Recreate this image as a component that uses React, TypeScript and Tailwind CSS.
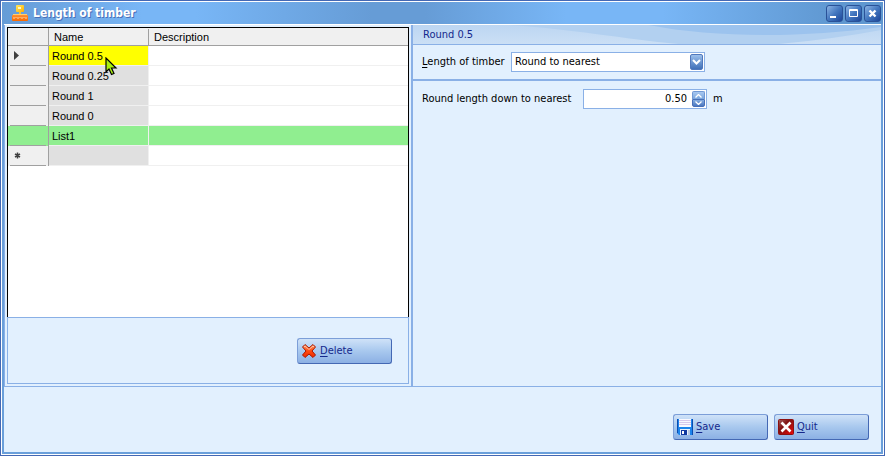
import { useState } from "react";

const rows = [
  { name: "Round 0.5", description: "", state: "current" },
  { name: "Round 0.25", description: "", state: "" },
  { name: "Round 1", description: "", state: "" },
  { name: "Round 0", description: "", state: "" },
  { name: "List1", description: "", state: "marked" },
  { name: "", description: "", state: "new" },
];

const nameBg: Record<string, string> = {
  current: "bg-[#ffff00]",
  marked: "bg-[#90ee90]",
  new: "bg-[#e0e0e0]",
  "": "bg-[#e0e0e0]",
};

function AppIcon() {
  return (
    <svg width="18" height="18" viewBox="0 0 18 18" aria-hidden="true">
      <defs>
        <linearGradient id="gold" x1="0" y1="0" x2="1" y2="1">
          <stop offset="0" stopColor="#ffe860" />
          <stop offset="1" stopColor="#ffb000" />
        </linearGradient>
        <linearGradient id="tape" x1="0" y1="0" x2="0" y2="1">
          <stop offset="0" stopColor="#ff9030" />
          <stop offset="1" stopColor="#f86800" />
        </linearGradient>
      </defs>
      <rect x="5" y="1" width="8" height="7" rx="1" fill="url(#gold)" />
      <path d="M7 3h3v2H7z" fill="#fff8c8" />
      <path d="M8 8h2v2H8z" fill="#f0c040" />
      <path d="M2 10.500h14" stroke="#ffd070" />
      <rect x="1" y="11" width="16" height="6" rx="1" fill="url(#tape)" />
      <path d="M3 13v2M5 13v1M7 13v2M9 13v1M11 13v2M13 13v1M15 13v2" stroke="#ffd8a8" />
    </svg>
  );
}

function DeleteIcon() {
  return (
    <svg width="16" height="16" viewBox="0 0 16 16" aria-hidden="true">
      <defs>
        <linearGradient id="cross" x1="0" y1="0" x2="0" y2="1">
          <stop offset="0" stopColor="#ffa070" />
          <stop offset="0.500" stopColor="#ff4a10" />
          <stop offset="1" stopColor="#f02800" />
        </linearGradient>
      </defs>
      <path
        d="M4 1.500 8 5l4-3.500L14.500 4 11 8l3.500 4-2.500 2.500L8 11l-4 3.500L1.500 12 5 8 1.500 4z"
        fill="url(#cross)"
        stroke="#a81800"
        strokeLinejoin="round"
      />
      <path d="M3 4l1-1 4 3.500L12 3l1 1" fill="none" stroke="#ffd0b8" strokeWidth="0.800" />
    </svg>
  );
}

function SaveIcon() {
  return (
    <svg width="16" height="16" viewBox="0 0 16 16" aria-hidden="true">
      <path d="M0 0h16v16H2l-2-2z" fill="#1c84ec" />
      <path d="M0 0h1v14H0zM15 0h1v16h-1z" fill="#0a4cb0" />
      <rect x="2" y="0" width="12" height="8" fill="#f8f8ff" />
      <path d="M2 1.500h12M2 3.500h12M2 5.500h12" stroke="#d8c8ec" />
      <rect x="3" y="10" width="10" height="6" fill="#e8f0fc" />
      <rect x="4" y="11" width="6" height="5" fill="#1038a0" />
      <rect x="5" y="12" width="2" height="3" fill="#fff" />
      <rect x="11" y="11" width="2" height="5" fill="#b8c8e0" />
    </svg>
  );
}

function QuitIcon() {
  return (
    <svg width="16" height="16" viewBox="0 0 16 16" aria-hidden="true">
      <defs>
        <linearGradient id="quit" x1="0" y1="0" x2="1" y2="1">
          <stop offset="0" stopColor="#a06060" />
          <stop offset="0.400" stopColor="#801010" />
          <stop offset="1" stopColor="#f00808" />
        </linearGradient>
      </defs>
      <rect x="0.500" y="0.500" width="15" height="15" rx="1" fill="url(#quit)" stroke="#8c1010" />
      <path d="M3.500 3.500l9 9M12.500 3.500l-9 9" stroke="#fff" strokeWidth="2.600" />
    </svg>
  );
}

function Cursor() {
  return (
    <svg className="pointer-events-none absolute top-[9px] left-[53px]" width="13" height="19" viewBox="0 0 13 19" aria-hidden="true">
      <path
        d="M1 1v14l3-3 2.500 5.500 2.500-1L6.500 11H11z"
        fill="#aaf010"
        stroke="#000"
        strokeWidth="1.200"
      />
    </svg>
  );
}

function CaptionButton({ label, children }: { label: string; children: React.ReactNode }) {
  return (
    <button
      aria-label={label}
      className="flex size-[17px] items-center justify-center rounded-[3px] border border-[#2a5298] bg-linear-to-br from-[#8cb4e4] via-[#4478c0] to-[#1c469a]"
    >
      <svg width="15" height="15" viewBox="0 0 15 15" fill="none" stroke="#fff" aria-hidden="true">
        {children}
      </svg>
    </button>
  );
}

function ActionButton({ icon, hotkey, rest }: { icon: React.ReactNode; hotkey: string; rest: string }) {
  return (
    <button className="flex h-[26px] w-[95px] items-center gap-[3px] rounded-[3px] border border-t-[#7c9ed8] border-r-[#4468b4] border-b-[#4468b4] border-l-[#7c9ed8] bg-linear-to-b from-[#cfe2f8] via-[#a8c8ee] to-[#8cb0e4] pl-[3px] text-[#14288c]">
      {icon}
      <span>
        <span className="underline underline-offset-2">{hotkey}</span>
        {rest}
      </span>
    </button>
  );
}

export default function App() {
  const [method, setMethod] = useState("nearest");
  const [step, setStep] = useState("0.50");

  const bump = (d: number) => setStep((parseFloat(step || "0") + d).toFixed(2));

  return (
    <div className="min-h-screen flex flex-col border border-[#4468b4] bg-white p-px font-['DejaVu_Sans_Condensed','DejaVu_Sans',sans-serif] text-[11px] leading-4 text-black">
      <div className="flex grow flex-col bg-[#6a9fda]">
        <header className="flex h-[22px] items-center bg-[linear-gradient(90deg,#669cd6_0%,#78b6f6_16%,#78b6f6_22%,#669cd6_42%,#669cd6_48%,#78b6f6_64%,#78b6f6_75%,#5f97d0_95%)] pr-[2px] pl-[9px]">
          <AppIcon />
          <h1 className="grow pl-1 text-[12px] font-bold text-white [text-shadow:1px_1px_0_#4a70b8]">Length of timber</h1>
          <div className="flex gap-[2px]">
            <CaptionButton label="Minimize">
              <path d="M3 11h6" strokeWidth="2" />
            </CaptionButton>
            <CaptionButton label="Maximize">
              <path d="M3.500 3.500h8v7h-8zM3 4.500h9" />
            </CaptionButton>
            <CaptionButton label="Close">
              <path d="M4.500 4.500l6 6M10.500 4.500l-6 6" strokeWidth="2.400" />
            </CaptionButton>
          </div>
        </header>

        <div className="mx-[2px] mb-[2px] flex grow flex-col border-t border-white bg-[#e2f0fe]">
          <div className="flex h-[362px] border-b border-[#8ab0e6]">
            {/* list of rounding rules */}
            <section className="flex w-[409px] shrink-0 flex-col border-r-2 border-l border-[#8ab0e6] p-[2px]">
              <div className="h-[290px] border border-b-0 border-black bg-white font-['Liberation_Sans',Arial,sans-serif]">
                <table className="w-full table-fixed border-separate border-spacing-0">
                  <colgroup>
                    <col className="w-[41px]" />
                    <col className="w-[100px]" />
                    <col />
                  </colgroup>
                  <thead>
                    <tr className="h-[18px] bg-[#f0f0f0] text-left">
                      <th className="border-r border-b border-[#a0a0a0] p-0"></th>
                      <th className="border-b border-[#a0a0a0] p-0 font-normal">
                        <div className="h-4 border-r border-[#a0a0a0] pl-[5px]">Name</div>
                      </th>
                      <th className="border-b border-[#a0a0a0] p-0 font-normal">
                        <div className="h-4 pl-[5px]">Description</div>
                      </th>
                    </tr>
                  </thead>
                  <tbody>
                    {rows.map((r) => (
                      <tr key={r.name} className="h-5">
                        <td className={`border-r border-[#a0a0a0] p-0 px-[2px] ${r.state === "marked" ? "bg-[#90ee90]" : "bg-[#f0f0f0]"}`}>
                          <div className="flex h-5 items-center border-b border-[#a0a0a0] pl-1">
                            {r.state === "current" && (
                              <svg width="5" height="9" viewBox="0 0 5 9" aria-hidden="true">
                                <path d="M0 0v9l5-4.500z" fill="#404040" />
                              </svg>
                            )}
                            {r.state === "new" && (
                              <svg width="7" height="7" viewBox="0 0 7 7" aria-hidden="true">
                                <path d="M3.500 0.500v6M1 2l5 3M6 2l-5 3" stroke="#404040" strokeWidth="1.500" />
                              </svg>
                            )}
                          </div>
                        </td>
                        <td className={`border-r border-b border-[#f0f0f0] p-0 pl-[3px] ${nameBg[r.state]}`}>
                          <div className="relative">
                            {r.name}
                            {r.state === "current" && <Cursor />}
                          </div>
                        </td>
                        <td className={`border-b border-[#f0f0f0] p-0 ${r.state === "marked" ? "bg-[#90ee90]" : ""}`}>{r.description}</td>
                      </tr>
                    ))}
                  </tbody>
                </table>
              </div>
              <div className="flex grow items-start justify-end border border-[#8ab0e6] pt-5 pr-4">
                <ActionButton icon={<DeleteIcon />} hotkey="D" rest="elete" />
              </div>
            </section>

            {/* settings of the selected rule */}
            <section className="grow">
              <div className="relative h-5 overflow-hidden border-b border-[#8ab0e6] bg-linear-to-b from-[#bcd6f2] to-[#cbdff5]">
                <svg className="absolute inset-0 size-full" viewBox="0 0 467 19" preserveAspectRatio="none" aria-hidden="true">
                  <path d="M95 0C160 4 210 14 265 19H365Q420 14 467 5V0z" fill="#b2d0f0" />
                  <path d="M235 0C300 13 390 13 467 2V0z" fill="#9cc3ee" />
                </svg>
                <h2 className="relative pt-[2px] pl-[10px] text-[#14288c]">Round 0.5</h2>
              </div>
              <div className="flex h-9 items-center border-b-2 border-[#8ab0e6] pl-[9px]">
                <label htmlFor="method" className="w-[89px]">
                  <span className="underline underline-offset-2">L</span>ength of timber
                </label>
                <div className="relative h-5 w-[194px]">
                  <select
                    id="method"
                    value={method}
                    onChange={(e) => setMethod(e.target.value)}
                    className="h-5 w-full appearance-none border border-[#8ab0e6] bg-white pl-[3px] outline-none"
                  >
                    <option value="nearest">Round to nearest</option>
                    <option value="down">Round down</option>
                    <option value="up">Round up</option>
                  </select>
                  <span className="pointer-events-none absolute top-[2px] right-[2px] flex h-4 w-[13px] items-center justify-center rounded-[2px] border border-[#5078bc] bg-linear-to-b from-[#9cc0ec] to-[#4070b8]">
                    <svg width="9" height="6" viewBox="0 0 9 6" aria-hidden="true">
                      <path d="M1 1l3.500 3.500L8 1" fill="none" stroke="#fff" strokeWidth="2" />
                    </svg>
                  </span>
                </div>
              </div>
              <div className="flex items-center pt-2 pl-[9px]">
                <label htmlFor="step" className="w-[161px]">Round length down to nearest</label>
                <div className="flex h-5 w-[124px] items-center border border-[#8ab0e6] bg-white pr-px">
                  <input
                    id="step"
                    value={step}
                    onChange={(e) => setStep(e.target.value)}
                    className="w-full min-w-0 grow pr-[5px] text-right outline-none"
                  />
                  <div className="flex w-[13px] shrink-0 flex-col">
                    <button
                      aria-label="Increase"
                      onClick={() => bump(0.5)}
                      className="flex h-2 items-center justify-center rounded-t-[2px] border border-b-0 border-[#7098d4] bg-linear-to-b from-[#a8c8f0] to-[#78a4dc]"
                    >
                      <svg width="7" height="4" viewBox="0 0 7 4" aria-hidden="true">
                        <path d="M0.500 3.500l3-3 3 3" fill="none" stroke="#fff" strokeWidth="1.300" />
                      </svg>
                    </button>
                    <button
                      aria-label="Decrease"
                      onClick={() => bump(-0.5)}
                      className="flex h-2 items-center justify-center rounded-b-[2px] border border-[#4870b8] bg-linear-to-b from-[#84ace0] to-[#4c78c0]"
                    >
                      <svg width="7" height="4" viewBox="0 0 7 4" aria-hidden="true">
                        <path d="M0.500 0.500l3 3 3-3" fill="none" stroke="#fff" strokeWidth="1.300" />
                      </svg>
                    </button>
                  </div>
                </div>
                <span className="pl-[6px]">m</span>
              </div>
            </section>
          </div>

          <footer className="flex justify-end gap-[6px] pt-[27px] pr-3 pb-3">
            <ActionButton icon={<SaveIcon />} hotkey="S" rest="ave" />
            <ActionButton icon={<QuitIcon />} hotkey="Q" rest="uit" />
          </footer>
        </div>
      </div>
    </div>
  );
}
